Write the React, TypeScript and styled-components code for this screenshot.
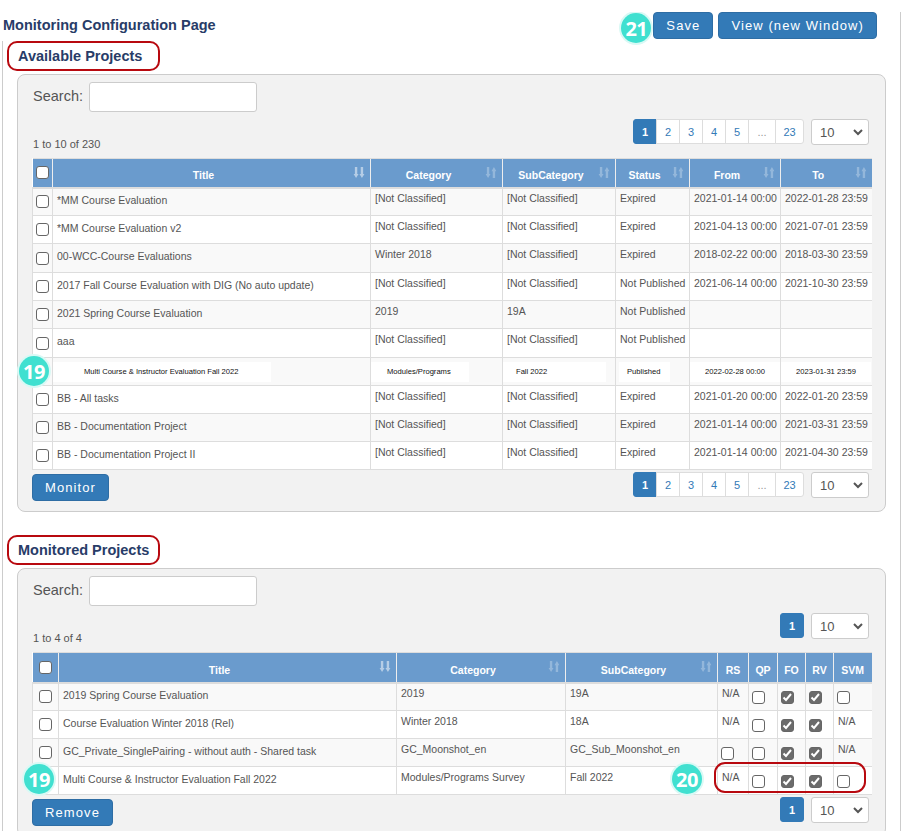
import React from "react";
import styled, { createGlobalStyle } from "styled-components";

type Column = { label: string; width: number; sort?: "active" | "idle" };

const availableColumns: Column[] = [
  { label: "Title", width: 318, sort: "active" },
  { label: "Category", width: 132, sort: "idle" },
  { label: "SubCategory", width: 113, sort: "idle" },
  { label: "Status", width: 74, sort: "idle" },
  { label: "From", width: 91, sort: "idle" },
  { label: "To", width: 91, sort: "idle" },
];

const monitoredColumns: Column[] = [
  { label: "Title", width: 338, sort: "active" },
  { label: "Category", width: 169, sort: "idle" },
  { label: "SubCategory", width: 152, sort: "idle" },
  { label: "RS", width: 31 },
  { label: "QP", width: 29 },
  { label: "FO", width: 28 },
  { label: "RV", width: 28 },
  { label: "SVM", width: 38 },
];

const NC = "[Not Classified]";

const availableRows: { cells: string[]; tall?: boolean }[] = [
  { cells: ["*MM Course Evaluation", NC, NC, "Expired", "2021-01-14 00:00", "2022-01-28 23:59"] },
  { cells: ["*MM Course Evaluation v2", NC, NC, "Expired", "2021-04-13 00:00", "2021-07-01 23:59"] },
  { cells: ["00-WCC-Course Evaluations", "Winter 2018", NC, "Expired", "2018-02-22 00:00", "2018-03-30 23:59"], tall: true },
  { cells: ["2017 Fall Course Evaluation with DIG (No auto update)", NC, NC, "Not Published", "2021-06-14 00:00", "2021-10-30 23:59"] },
  { cells: ["2021 Spring Course Evaluation", "2019", "19A", "Not Published", "", ""] },
  { cells: ["aaa", NC, NC, "Not Published", "", ""], tall: true },
  { cells: [] },
  { cells: ["BB - All tasks", NC, NC, "Expired", "2021-01-20 00:00", "2022-01-20 23:59"] },
  { cells: ["BB - Documentation Project", NC, NC, "Expired", "2021-01-14 00:00", "2021-03-31 23:59"] },
  { cells: ["BB - Documentation Project II", NC, NC, "Expired", "2021-01-14 00:00", "2021-04-30 23:59"] },
];

// the row pasted over the table: white strips with smaller black text
const pastedCells = [
  { text: "Multi Course & Instructor Evaluation Fall 2022", width: 218, offset: 0, pad: 31 },
  { text: "Modules/Programs", width: 98, offset: 0, pad: 16 },
  { text: "Fall 2022", width: 103, offset: 0, pad: 13 },
  { text: "Published", width: 51, offset: 3, pad: 8 },
  { text: "2022-02-28 00:00", width: 90, offset: 0, pad: 15 },
  { text: "2023-01-31 23:59", width: 90, offset: 0, pad: 15 },
];

type Flag = "N/A" | "on" | "off";

const monitoredRows: { cells: string[]; flags: Flag[] }[] = [
  { cells: ["2019 Spring Course Evaluation", "2019", "19A"], flags: ["N/A", "off", "on", "on", "off"] },
  { cells: ["Course Evaluation Winter 2018 (Rel)", "Winter 2018", "18A"], flags: ["N/A", "off", "on", "on", "N/A"] },
  { cells: ["GC_Private_SinglePairing - without auth - Shared task", "GC_Moonshot_en", "GC_Sub_Moonshot_en"], flags: ["off", "off", "on", "on", "N/A"] },
  { cells: ["Multi Course & Instructor Evaluation Fall 2022", "Modules/Programs Survey", "Fall 2022"], flags: ["N/A", "off", "on", "on", "off"] },
];

const DOWN = "M2 0h2.6v7.5H6L3.3 12 .6 7.5H2z";
const SECOND_DOWN = "M8.4 0H11v7.5h1.4L9.7 12 7 7.5h1.4z";
const UP = "M8.4 12H11V4.5h1.4L9.7 0 7 4.5h1.4z";

const SortArrows: React.FC<{ active?: boolean }> = ({ active }) => (
  <SortIcon viewBox="0 0 13 12" $active={active}>
    <path d={DOWN} />
    <path d={active ? SECOND_DOWN : UP} />
  </SortIcon>
);

const Pager: React.FC<{ pages: string[] }> = ({ pages }) => (
  <PagerWrap>
    <PageList>
      {pages.map((page, i) => (
        <PageItem key={page} $current={i === 0} $muted={page === "..."} $wide={page.length > 1}>
          {page}
        </PageItem>
      ))}
    </PageList>
    <SizeSelect defaultValue="10">
      <option value="10">10</option>
    </SizeSelect>
  </PagerWrap>
);

const TableHead: React.FC<{ columns: Column[]; checkWidth: number; tall?: boolean }> = ({ columns, checkWidth, tall }) => (
  <>
    <colgroup>
      <col width={checkWidth} />
      {columns.map((c) => (
        <col key={c.label} width={c.width} />
      ))}
    </colgroup>
    <thead>
      <HeadRow $tall={tall}>
        <HeadCheckCell>
          <Check type="checkbox" />
        </HeadCheckCell>
        {columns.map((c) => (
          <HeadCell key={c.label} $sortable={!!c.sort}>
            {c.label}
            {c.sort && <SortArrows active={c.sort === "active"} />}
          </HeadCell>
        ))}
      </HeadRow>
    </thead>
  </>
);

const App: React.FC = () => {
  return (
    <Frame>
      <GlobalStyle />
      <TopBar>
        <PageTitle>Monitoring Configuration Page</PageTitle>
        <TopActions>
          <Badge>21</Badge>
          <Button>Save</Button>
          <Button>View (new Window)</Button>
        </TopActions>
      </TopBar>
      <Body>
        <SectionTitle>Available Projects</SectionTitle>
        <Panel>
          <SearchRow>
            <SearchLabel>Search:</SearchLabel>
            <SearchInput type="text" />
          </SearchRow>
          <InfoRow>
            <Info>1 to 10 of 230</Info>
            <Pager pages={["1", "2", "3", "4", "5", "...", "23"]} />
          </InfoRow>
          <TableWrap>
            <DataTable>
              <TableHead columns={availableColumns} checkWidth={20} />
              <tbody>
                {availableRows.map((row, r) =>
                  row.cells.length === 0 ? (
                    <Row key={r}>
                      <CheckCell />
                      {pastedCells.map((p) => (
                        <PastedCell key={p.text}>
                          <PastedStrip $width={p.width} $offset={p.offset} $pad={p.pad}>
                            {p.text}
                          </PastedStrip>
                        </PastedCell>
                      ))}
                    </Row>
                  ) : (
                    <Row key={r} $tall={row.tall}>
                      <CheckCell>
                        <Check type="checkbox" />
                      </CheckCell>
                      {row.cells.map((cell, c) => (
                        <Cell key={c} $title={c === 0}>
                          {cell}
                        </Cell>
                      ))}
                    </Row>
                  )
                )}
              </tbody>
            </DataTable>
            <RowBadge $x={-13} $y={198}>19</RowBadge>
          </TableWrap>
          <FooterRow>
            <FooterButton>Monitor</FooterButton>
            <Pager pages={["1", "2", "3", "4", "5", "...", "23"]} />
          </FooterRow>
        </Panel>

        <SectionTitle $next>Monitored Projects</SectionTitle>
        <Panel>
          <SearchRow>
            <SearchLabel>Search:</SearchLabel>
            <SearchInput type="text" />
          </SearchRow>
          <InfoRow>
            <Info>1 to 4 of 4</Info>
            <Pager pages={["1"]} />
          </InfoRow>
          <TableWrap>
            <DataTable>
              <TableHead columns={monitoredColumns} checkWidth={26} tall />
              <tbody>
                {monitoredRows.map((row, r) => (
                  <Row key={r}>
                    <CheckCell>
                      <Check type="checkbox" />
                    </CheckCell>
                    {row.cells.map((cell, c) => (
                      <Cell key={c} $title={c === 0}>
                        {cell}
                      </Cell>
                    ))}
                    {row.flags.map((flag, f) =>
                      flag === "N/A" ? (
                        <Cell key={f}>N/A</Cell>
                      ) : (
                        <FlagCell key={f}>
                          <FlagCheck type="checkbox" defaultChecked={flag === "on"} />
                        </FlagCell>
                      )
                    )}
                  </Row>
                ))}
              </tbody>
            </DataTable>
            <RowBadge $x={-8} $y={112}>19</RowBadge>
            <RowBadge $x={640} $y={112}>20</RowBadge>
            <Callout />
          </TableWrap>
          <FooterRow>
            <FooterButton>Remove</FooterButton>
            <Pager pages={["1"]} />
          </FooterRow>
        </Panel>
      </Body>
    </Frame>
  );
};

const GlobalStyle = createGlobalStyle`
  html, body {
    margin: 0;
    height: 831px;
    overflow: hidden;
    background: #fff;
    font-family: "Liberation Sans", Arial, sans-serif;
  }
`;

const Frame = styled.div`
  box-sizing: border-box;
  width: 901px;
  height: 819px;
  margin-top: 12px;
  border-right: 1px solid #ccc;
  overflow: hidden;
`;

const TopBar = styled.div`
  display: flex;
  justify-content: space-between;
  height: 31px;
  padding: 0 23px 0 3px;
`;

const PageTitle = styled.h1`
  margin: 6px 0 0;
  font-size: 14.5px;
  line-height: 15px;
  font-weight: bold;
  color: #283c68;
`;

const TopActions = styled.div`
  display: flex;
  gap: 5px;
  height: 27px;
  position: relative;
`;

const Button = styled.button`
  box-sizing: border-box;
  height: 27px;
  padding: 0 12px;
  background: #337ab7;
  border: 1px solid #2e6da4;
  border-radius: 4px;
  color: #fff;
  font-family: "Liberation Sans", Arial, sans-serif;
  font-size: 13px;
  letter-spacing: 1.1px;
`;

const FooterButton = styled(Button)`
  margin-top: 2px;
`;

const Badge = styled.span`
  box-sizing: border-box;
  width: 30px;
  height: 30px;
  position: absolute;
  left: -32px;
  top: 1px;
  display: flex;
  align-items: center;
  justify-content: center;
  border-radius: 50%;
  background: #40e0d0;
  box-shadow: 0 0 0 2px #d9f9f5;
  color: #fff;
  font-family: "Open Sans", "Liberation Sans", sans-serif;
  font-size: 20px;
  font-weight: 700;
  letter-spacing: -0.5px;
`;

const RowBadge = styled(Badge)<{ $x: number; $y: number }>`
  left: ${(p) => p.$x}px;
  top: ${(p) => p.$y}px;
`;

const Body = styled.div`
  margin-left: 2px;
  height: 800px;
  border-left: 1px solid #ccc;
  padding-left: 4px;
`;

const SectionTitle = styled.h2<{ $next?: boolean }>`
  box-sizing: border-box;
  width: 153px;
  height: 30px;
  margin: ${(p) => (p.$next ? "23px" : "-2px")} 0 3px;
  padding-left: 9px;
  border: 2px solid #b8090f;
  border-radius: 10px;
  background: #fff;
  font-size: 14.5px;
  line-height: 26px;
  font-weight: bold;
  color: #283c68;
  white-space: nowrap;
`;

const Panel = styled.section`
  box-sizing: border-box;
  width: 869px;
  margin-left: 10px;
  padding: 7px 14px 10px;
  background: #f2f2f2;
  border: 1px solid #ccc;
  border-radius: 8px;
`;

const SearchRow = styled.div`
  display: flex;
  align-items: center;
  height: 30px;
  padding-left: 1px;
`;

const SearchLabel = styled.label`
  width: 56px;
  padding-bottom: 2px;
  font-size: 14.5px;
  color: #555;
`;

const SearchInput = styled.input`
  box-sizing: border-box;
  width: 168px;
  height: 30px;
  background: #fff;
  border: 1px solid #ccc;
  border-radius: 3px;
`;

const InfoRow = styled.div`
  display: flex;
  justify-content: space-between;
  height: 32px;
  margin: 7px 0 7px;
  padding: 0 2px 0 1px;
`;

const Info = styled.div`
  align-self: flex-end;
  font-size: 11px;
  line-height: 14px;
  color: #555;
`;

const PagerWrap = styled.div`
  display: flex;
  gap: 7px;
  height: 26px;
`;

const PageList = styled.div`
  display: flex;
  height: 25px;
`;

const PageItem = styled.span<{ $current?: boolean; $muted?: boolean; $wide?: boolean }>`
  box-sizing: border-box;
  width: ${(p) => (p.$muted ? "28px" : p.$wide ? "29px" : "24px")};
  display: flex;
  align-items: center;
  justify-content: center;
  background: ${(p) => (p.$current ? "#337ab7" : "#fff")};
  border: 1px solid ${(p) => (p.$current ? "#337ab7" : "#ddd")};
  margin-left: -1px;
  font-size: 11px;
  font-weight: ${(p) => (p.$current ? "bold" : "normal")};
  color: ${(p) => (p.$current ? "#fff" : p.$muted ? "#999" : "#337ab7")};

  &:first-child {
    margin-left: 0;
    border-radius: 3px 0 0 3px;
  }
  &:last-child {
    border-radius: 0 3px 3px 0;
  }
  &:only-child {
    border-radius: 3px;
  }
`;

const SizeSelect = styled.select`
  box-sizing: border-box;
  width: 58px;
  height: 26px;
  padding: 0 0 0 8px;
  appearance: none;
  background: #fff url("data:image/svg+xml,%3Csvg xmlns='http://www.w3.org/2000/svg' width='10' height='7'%3E%3Cpath d='M1 1l4 4 4-4' fill='none' stroke='%23555' stroke-width='2'/%3E%3C/svg%3E") no-repeat right 5px center;
  border: 1px solid #ccc;
  border-radius: 3px;
  font-family: "Liberation Sans", Arial, sans-serif;
  font-size: 13px;
  color: #555;
`;

const TableWrap = styled.div`
  position: relative;
  width: 839px;
`;

const DataTable = styled.table`
  width: 839px;
  table-layout: fixed;
  border-collapse: collapse;
  background: #fff;
  font-size: 10.5px;
  color: #555;

  td:last-child {
    border-right: 0;
  }
`;

const HeadRow = styled.tr<{ $tall?: boolean }>`
  height: ${(p) => (p.$tall ? "30px" : "29px")};
`;

const HeadCell = styled.th<{ $sortable?: boolean }>`
  position: relative;
  box-sizing: border-box;
  padding: 4.5px ${(p) => (p.$sortable ? "16px" : "0")} 0 0;
  background: #6a9bcd;
  border-top: 1px solid #ddd;
  border-left: 1px solid #eee;
  border-bottom: 2px solid #ddd;
  font-size: 10.5px;
  font-weight: bold;
  color: #fff;
  text-align: center;
`;

const HeadCheckCell = styled.th`
  box-sizing: border-box;
  padding: 0;
  background: #6a9bcd;
  border-top: 1px solid #ddd;
  border-bottom: 2px solid #ddd;
  text-align: center;
`;

const SortIcon = styled.svg<{ $active?: boolean }>`
  position: absolute;
  top: 8px;
  right: 5px;
  width: 12px;
  height: 11px;
  fill: ${(p) => (p.$active ? "rgba(255,255,255,.5)" : "rgba(255,255,255,.28)")};
`;

const Row = styled.tr<{ $tall?: boolean }>`
  height: ${(p) => (p.$tall ? "29px" : "28px")};
  background: #fff;
  &:nth-child(odd) {
    background: #f9f9f9;
  }
`;

const CheckCell = styled.td`
  padding: 0;
  border: 1px solid #ddd;
  text-align: center;
`;

const Cell = styled.td<{ $title?: boolean }>`
  padding: ${(p) => (p.$title ? "0 4px 4px" : "0 0 8px 4px")};
  border: 1px solid #ddd;
  white-space: nowrap;
  overflow: hidden;
`;

const PastedCell = styled.td`
  padding: 0;
  border: 1px solid #ddd;
`;

const PastedStrip = styled.div<{ $width: number; $offset: number; $pad: number }>`
  box-sizing: border-box;
  width: ${(p) => p.$width}px;
  height: 20px;
  margin-left: ${(p) => p.$offset}px;
  padding-left: ${(p) => p.$pad}px;
  display: flex;
  align-items: center;
  background: #fff;
  font-size: 7.6px;
  color: #111;
  white-space: nowrap;
`;

const FlagCell = styled.td`
  padding: 1px 0 0 3px;
  border: 1px solid #ddd;
`;

const Check = styled.input`
  appearance: none;
  display: block;
  box-sizing: border-box;
  width: 13px;
  height: 13px;
  margin: 0 auto;
  background: #fff;
  border: 1px solid #666;
  border-radius: 3px;

  &:checked {
    background: #6b6b6b url("data:image/svg+xml,%3Csvg xmlns='http://www.w3.org/2000/svg' width='13' height='13'%3E%3Cpath d='M2.5 6.5l2.5 2.5 5-6' fill='none' stroke='%23fff' stroke-width='2'/%3E%3C/svg%3E") no-repeat center;
  }
`;

const FlagCheck = styled(Check)`
  margin: 0;
`;

const FooterRow = styled.div`
  display: flex;
  justify-content: space-between;
  margin-top: 2px;
  padding-right: 2px;
`;

const Callout = styled.div`
  position: absolute;
  left: 682px;
  top: 110px;
  width: 152px;
  height: 31px;
  box-sizing: border-box;
  border: 2px solid #b8090f;
  border-radius: 11px;
`;

export default App;
